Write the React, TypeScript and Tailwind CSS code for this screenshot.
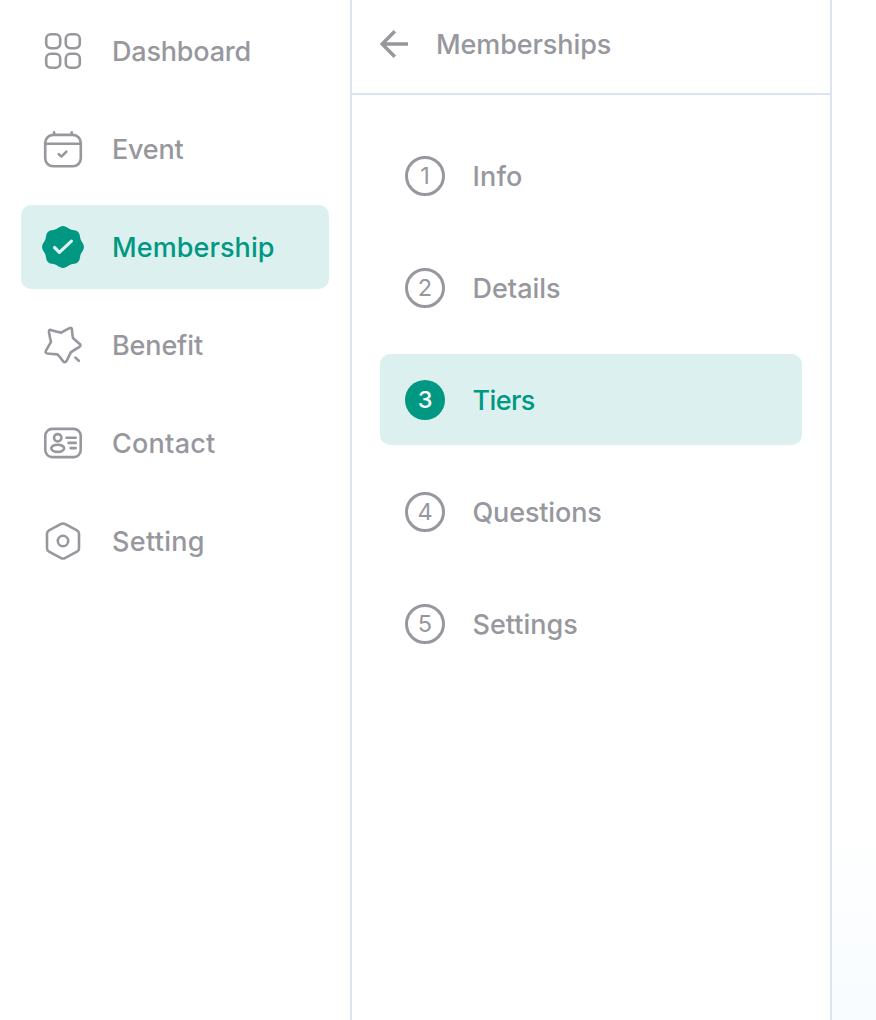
import type { ReactNode } from "react";

const badgePath =
  Array.from({ length: 96 }, (_, i) => {
    const t = (i / 96) * Math.PI * 2;
    const r = 20.15 + 0.95 * Math.cos(8 * t) - 0.15 * Math.cos(4 * t);
    return `${i ? "L" : "M"}${(21 + r * Math.sin(t)).toFixed(2)} ${(21 - r * Math.cos(t)).toFixed(2)}`;
  }).join("") + "Z";

function Icon({ children }: { children: ReactNode }) {
  return (
    <svg
      className="size-[42px] shrink-0"
      viewBox="0 0 42 42"
      fill="none"
      stroke="currentColor"
      strokeWidth="2.6"
      strokeLinecap="round"
      strokeLinejoin="round"
    >
      {children}
    </svg>
  );
}

const DashboardIcon = (
  <Icon>
    <rect x="4.2" y="4.2" width="14" height="14" rx="4.6" />
    <rect x="23.8" y="4.2" width="14" height="14" rx="4.6" />
    <rect x="4.2" y="23.8" width="14" height="14" rx="4.6" />
    <rect x="23.8" y="23.8" width="14" height="14" rx="4.6" />
  </Icon>
);

const EventIcon = (
  <Icon>
    <rect x="3.2" y="6.9" width="35.6" height="31.4" rx="8" />
    <path d="M3.5 15.7H38.5M12.1 4.4v2.2M29.7 4.4v2.2" />
    <path d="M16.8 26.2L19.4 28.6L24.4 23.6" />
  </Icon>
);

const MembershipIcon = (
  <Icon>
    <path d={badgePath} fill="currentColor" stroke="none" />
    <path d="M12.5 21.5L17.4 26.3L29.4 15.2" stroke="#dcf1ef" strokeWidth="3.2" />
  </Icon>
);

const BenefitIcon = (
  <Icon>
    <path d="M8.8 5.9Q14 7.6 19.3 8.6Q23 6.4 27.5 4.2Q30 3.2 30 5.8Q30.2 10 31 14Q34.4 17.2 37.8 20Q39.4 21.7 37.3 23Q32.6 25.6 28.8 28.4Q26.8 32.8 24.5 37Q22.9 39.4 21 37.2Q18.4 33.4 15.5 30.4Q10.6 30.2 5.4 29.5Q2.6 29 4 26.6Q6.6 21.8 9 17.8Q7.6 12.8 7 8.2Q6.8 5.3 8.8 5.9Z" />
    <path d="M33.4 33.6L36.8 36.8" />
  </Icon>
);

const ContactIcon = (
  <Icon>
    <rect x="3.3" y="6.9" width="35.4" height="28.2" rx="7" />
    <circle cx="15.7" cy="15.8" r="3.7" />
    <ellipse cx="15.7" cy="26.3" rx="6.5" ry="3.6" />
    <path d="M24.6 15.7H33.7M26.6 20.9H33.7M28.6 26.1H33.7" />
  </Icon>
);

const SettingIcon = (
  <Icon>
    <path d="M18.7 4.2Q21 2.7 23.3 4.2L35 10.3Q37 11.5 37 13.8V28.2Q37 30.5 35 31.7L23.3 37.8Q21 39.3 18.7 37.8L7 31.7Q5 30.5 5 28.2V13.8Q5 11.5 7 10.3Z" />
    <circle cx="21" cy="21" r="5.2" />
  </Icon>
);

const navItems = [
  { label: "Dashboard", icon: DashboardIcon, tracking: "tracking-[-0.2px]" },
  { label: "Event", icon: EventIcon, tracking: "tracking-[-0.25px]" },
  { label: "Membership", icon: MembershipIcon, tracking: "tracking-[0.08px]", active: true },
  { label: "Benefit", icon: BenefitIcon, tracking: "tracking-[-0.15px]" },
  { label: "Contact", icon: ContactIcon, tracking: "tracking-[0.25px]" },
  { label: "Setting", icon: SettingIcon, tracking: "tracking-[0.3px]" },
];

const steps = [
  { label: "Info", tracking: "tracking-[0.15px]" },
  { label: "Details", tracking: "tracking-[0px]" },
  { label: "Tiers", tracking: "tracking-[-0.6px]", active: true },
  { label: "Questions", tracking: "tracking-[-0.15px]" },
  { label: "Settings", tracking: "tracking-[0px]" },
];

export default function App() {
  return (
    <div className="flex h-[1020px] w-[876px] overflow-hidden bg-white font-['Inter',sans-serif] text-[27px] leading-[42px] font-medium text-[#97979e]">
      <nav className="flex w-[352px] shrink-0 flex-col gap-3.5 border-r-2 border-[#dde3f0] pt-[9px] pr-[21px] pl-[21px]">
        {navItems.map((item) => (
          <a
            key={item.label}
            className={`flex h-[84px] items-center gap-[28px] rounded-[10px] pl-[21px] ${
              item.active ? "bg-[#dcf1ef] text-[#009883]" : ""
            }`}
          >
            {item.icon}
            <span className={`pt-0.5 ${item.tracking}`}>{item.label}</span>
          </a>
        ))}
      </nav>

      <section className="flex w-[480px] shrink-0 flex-col border-r-2 border-[#dde3f0]">
        <header className="flex h-[95px] shrink-0 items-center gap-7 border-b-2 border-[#dde3f0] pb-[5px] pl-7">
          <svg className="h-7 w-7 shrink-0" viewBox="0 0 28 28" fill="none" stroke="currentColor" strokeWidth="3.5">
            <path d="M28 14H3M14.8 1.3L2.2 14L14.8 26.7" />
          </svg>
          <h1 className="pt-0.5 tracking-[-0.1px]">Memberships</h1>
        </header>
        <ol className="flex flex-col gap-[21px] px-7 pt-[35px]">
          {steps.map((step, i) => (
            <li
              key={step.label}
              className={`flex h-[91px] items-center gap-[27.5px] rounded-[10px] pl-[25px] ${
                step.active ? "bg-[#dcf1ef] text-[#009883]" : ""
              }`}
            >
              <span
                className={`flex size-10 shrink-0 items-center justify-center rounded-full text-[23.5px] leading-none ${
                  step.active ? "bg-[#009883] font-medium text-white" : "border-3 border-[#97979e] font-normal"
                }`}
              >
                {i + 1}
              </span>
              <span className={`pt-0.5 ${step.tracking}`}>{step.label}</span>
            </li>
          ))}
        </ol>
      </section>

      <main className="grow bg-linear-to-b from-white from-80% to-[#f8fcff]" />
    </div>
  );
}
